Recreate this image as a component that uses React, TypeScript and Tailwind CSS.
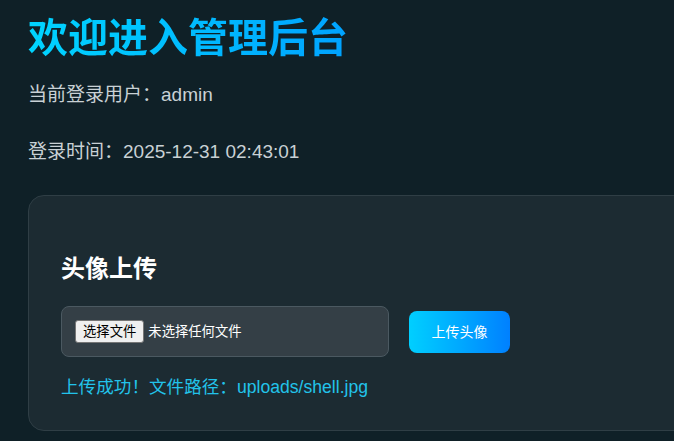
export default function App() {
  return (
    <div
      className="w-full min-h-screen h-[441px] overflow-hidden bg-[#0f2027] text-[#c9d1d5] px-7"
      style={{ fontFamily: '"Liberation Sans", "Noto Sans CJK SC", sans-serif' }}
    >
      <h1 className="pt-[14px] text-[40px] leading-[48px] font-bold bg-gradient-to-r from-[#00d4ff] to-[#0070ff] bg-clip-text text-transparent">
        欢迎进入管理后台
      </h1>
      <p className="mt-[19px] text-[19px] leading-7">当前登录用户：admin</p>
      <p className="mt-[29px] text-[19px] leading-7">登录时间：2025-12-31 02:43:01</p>

      <div className="mt-[29px] w-[700px] h-[236px] rounded-2xl border border-[#2f3e45] bg-[#1c2b32] px-8 pt-[57px]">
        <h2 className="text-2xl leading-8 font-bold text-white">头像上传</h2>
        <div className="mt-[21px] flex items-center gap-5">
          <div className="w-[328px] h-[51px] flex items-center gap-1 px-[13px] rounded-lg border border-[#4b5961] bg-[#343f46]">
            <span className="px-[7px] h-[23px] flex items-center text-[13.33px] text-black bg-[#efefef] border border-[#767676] rounded-[3px]">
              选择文件
            </span>
            <span className="text-[13.33px] text-white">未选择任何文件</span>
          </div>
          <button className="w-[101px] h-[42px] rounded-lg bg-gradient-to-r from-[#00cfff] to-[#0080ff] text-white text-sm">
            上传头像
          </button>
        </div>
        <p className="mt-[18px] text-[17.6px] leading-6 text-[#22c3ea]">上传成功！文件路径：uploads/shell.jpg</p>
      </div>
    </div>
  );
}
